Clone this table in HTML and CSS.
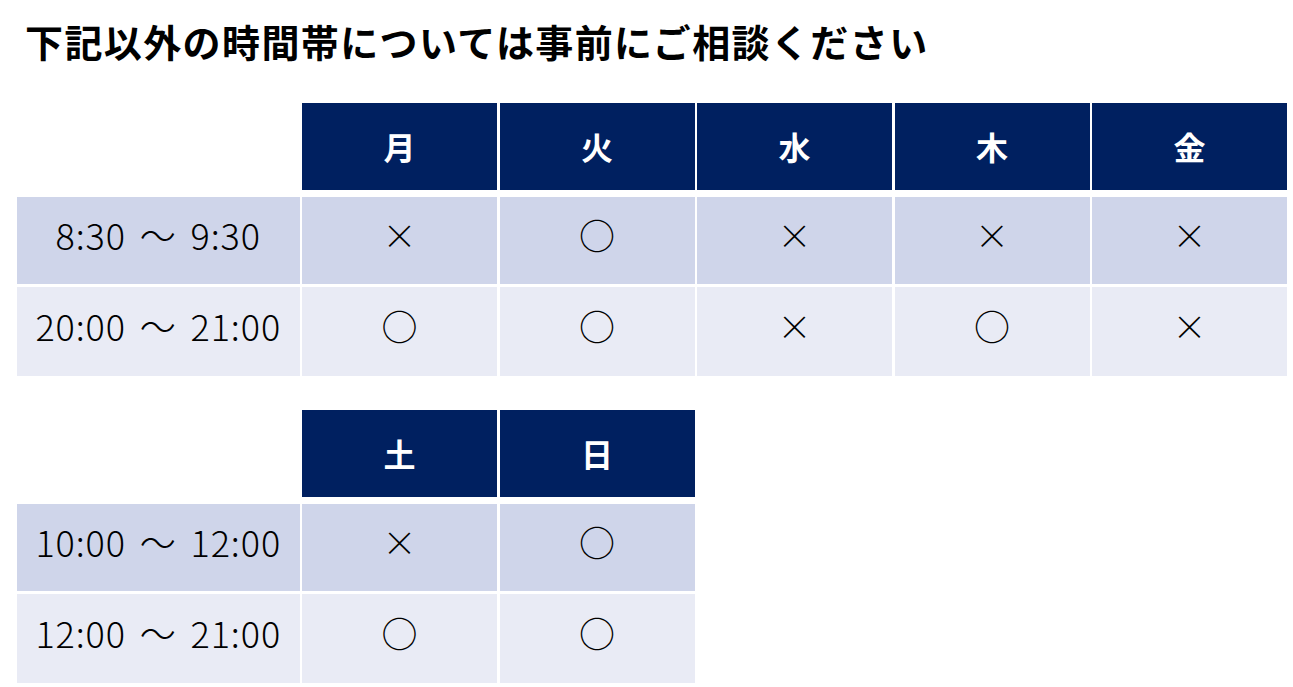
FILE: index.html
```html
<!DOCTYPE html>
<html lang="ja">
<head>
<meta charset="utf-8">
<title>時間帯</title>
<link rel="stylesheet" href="styles.css">
</head>
<body>
<div class="page">
  <h1 class="title">下記以外の時間帯については事前にご相談ください</h1>

  <div class="schedule five">
    <div class="blank"></div>
    <div class="head">月</div>
    <div class="head">火</div>
    <div class="head">水</div>
    <div class="head">木</div>
    <div class="head">金</div>

    <div class="label dark">8:30 ～ 9:30</div>
    <div class="cell dark x">×</div>
    <div class="cell dark">○</div>
    <div class="cell dark x">×</div>
    <div class="cell dark x">×</div>
    <div class="cell dark x">×</div>

    <div class="label light">20:00 ～ 21:00</div>
    <div class="cell light">○</div>
    <div class="cell light">○</div>
    <div class="cell light x">×</div>
    <div class="cell light">○</div>
    <div class="cell light x">×</div>
  </div>

  <div class="schedule two">
    <div class="blank"></div>
    <div class="head">土</div>
    <div class="head">日</div>

    <div class="label dark">10:00 ～ 12:00</div>
    <div class="cell dark x">×</div>
    <div class="cell dark">○</div>

    <div class="label light">12:00 ～ 21:00</div>
    <div class="cell light">○</div>
    <div class="cell light">○</div>
  </div>
</div>
</body>
</html>
```

FILE: styles.css
```css
html, body {
  margin: 0;
  padding: 0;
  background: #ffffff;
}

body {
  font-family: "Noto Sans CJK JP", "Noto Sans", sans-serif;
  color: #000000;
}

.page {
  padding: 18px 0 0 17px;
}

.title {
  margin: 0 0 39px 8px;
  font-size: 38px;
  line-height: 46px;
  font-weight: 700;
  letter-spacing: 1.4px;
  white-space: nowrap;
}

.schedule {
  display: grid;
  column-gap: 2.5px;
  row-gap: 3px;
  grid-template-rows: 91px 87px 89px;
}

.schedule.five {
  grid-template-columns: 282.5px repeat(5, 195px);
  margin-bottom: 34px;
}

.schedule.two {
  grid-template-columns: 282.5px repeat(2, 195px);
}

.blank,
.head {
  margin-bottom: 4px;
}

.head {
  background: #002060;
  color: #ffffff;
  font-weight: 700;
  font-size: 32px;
  display: flex;
  align-items: center;
  justify-content: center;
  padding-bottom: 2px;
}

.label,
.cell {
  display: flex;
  align-items: center;
  justify-content: center;
  font-size: 36px;
  font-weight: 400;
  white-space: nowrap;
  padding-bottom: 13px;
}

.label {
  font-weight: 300;
  letter-spacing: 0.9px;
  word-spacing: 5px;
}

.dark {
  background: #cfd5ea;
}

.light {
  background: #e9ebf5;
}

.cell.x {
  font-size: 34px;
  font-weight: 300;
}
```
